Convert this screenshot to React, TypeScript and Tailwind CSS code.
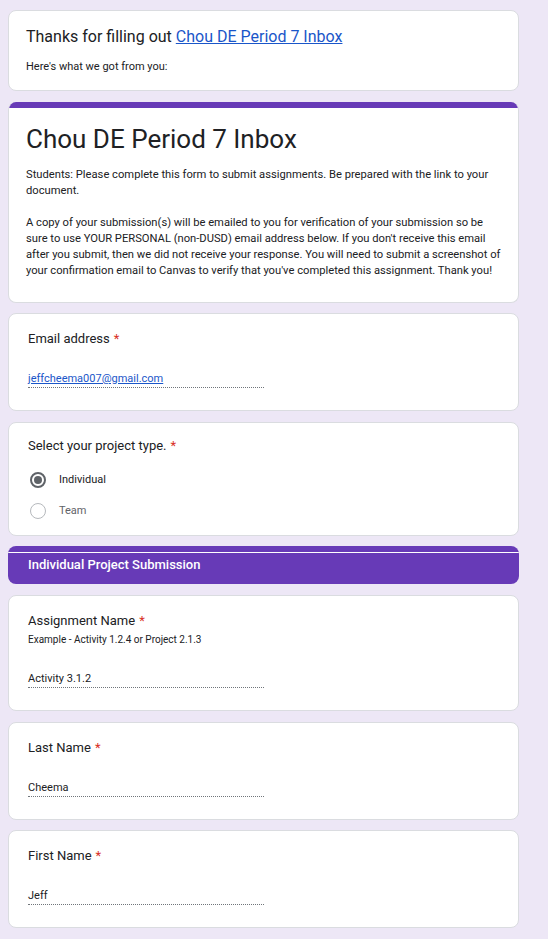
import type { ReactNode } from "react";

function Card({ children, className = "" }: { children: ReactNode; className?: string }) {
  return (
    <div className={`w-[511px] rounded-lg border border-[#dadce0] bg-white ${className}`}>
      {children}
    </div>
  );
}

function Required() {
  return <span className="ml-1 text-[#d93025]">*</span>;
}

function Question({
  label,
  help,
  value,
  link = false,
}: {
  label: string;
  help?: string;
  value: string;
  link?: boolean;
}) {
  return (
    <Card className="px-[19px] pt-[15px] pb-[22px]">
      <div className="text-[13px] leading-5 text-[#202124]">
        {label}
        <Required />
      </div>
      {help ? (
        <div className="mt-[2px] text-[10px] leading-[14px] text-[#202124]">{help}</div>
      ) : null}
      <div
        className={`${help ? "mt-[24px]" : "mt-[22px]"} w-[236px] border-b border-dotted border-[#70757a] text-[11px] leading-4 ${
          link ? "text-[#1a56c9] underline" : "text-[#202124]"
        }`}
      >
        {value}
      </div>
    </Card>
  );
}

function Radio({ label, checked }: { label: string; checked?: boolean }) {
  return (
    <div className="flex h-6 items-center">
      <span
        className={`ml-[2px] flex h-4 w-4 items-center justify-center rounded-full ${
          checked ? "border-2 border-[#5f6368]" : "border-[1.5px] border-[#b6b9bd]"
        }`}
      >
        {checked ? <span className="h-2 w-2 rounded-full bg-[#5f6368]" /> : null}
      </span>
      <span
        className={`ml-[13px] text-[11px] ${checked ? "text-[#202124]" : "text-[#5f6368]"}`}
      >
        {label}
      </span>
    </div>
  );
}

export default function App() {
  return (
    <div
      className="min-h-[939px] bg-[#ede7f6] pt-[10px] pl-2 pb-4"
      style={{ fontFamily: "Roboto, 'Liberation Sans', sans-serif" }}
    >
      <Card className="px-[17px] pt-[14px] pb-[15px]">
        <div className="text-base leading-6 text-[#202124]">
          Thanks for filling out{" "}
          <a className="text-[#1a56c9] underline">Chou DE Period 7 Inbox</a>
        </div>
        <div className="mt-[10px] text-[11px] leading-4 text-[#202124]">
          Here's what we got from you:
        </div>
      </Card>

      <div className="mt-[11px] w-[511px] overflow-hidden rounded-lg border border-t-0 border-[#dadce0] bg-white">
        <div className="h-[6px] bg-[#673ab7]" />
        <div className="px-[17px] pt-[13px] pb-[23px]">
          <h1 className="text-[26px] leading-9 text-[#202124]">Chou DE Period 7 Inbox</h1>
          <div className="mt-[10px] text-[11.2px] leading-4 text-[#202124]">
            <p>
              Students: Please complete this form to submit assignments. Be prepared with the link to your
              <br />
              document.
            </p>
            <p className="mt-4">
              A copy of your submission(s) will be emailed to you for verification of your submission so be
              <br />
              sure to use YOUR PERSONAL (non-DUSD) email address below. If you don't receive this email
              <br />
              after you submit, then we did not receive your response. You will need to submit a screenshot of
              <br />
              your confirmation email to Canvas to verify that you've completed this assignment. Thank you!
            </p>
          </div>
        </div>
      </div>

      <div className="mt-[10px]">
        <Question label="Email address" value="jeffcheema007@gmail.com" link />
      </div>

      <Card className="mt-[11px] px-[19px] pt-[13px] pb-[12px]">
        <div className="text-[13px] leading-5 text-[#202124]">
          Select your project type.
          <Required />
        </div>
        <div className="mt-[12px] flex flex-col gap-[7px]">
          <Radio label="Individual" checked />
          <Radio label="Team" />
        </div>
      </Card>

      <div className="mt-[10px] w-[511px] overflow-hidden rounded-lg bg-[#673ab7]">
        <div className="h-[6px]" />
        <div className="h-px bg-white" />
        <div className="h-[31px] pl-5 pt-[2px] text-[13px] font-medium leading-5 text-white">
          Individual Project Submission
        </div>
      </div>

      <div className="mt-[11px]">
        <Question
          label="Assignment Name"
          help="Example - Activity 1.2.4 or Project 2.1.3"
          value="Activity 3.1.2"
        />
      </div>
      <div className="mt-[11px]">
        <Question label="Last Name" value="Cheema" />
      </div>
      <div className="mt-[10px]">
        <Question label="First Name" value="Jeff" />
      </div>
    </div>
  );
}
